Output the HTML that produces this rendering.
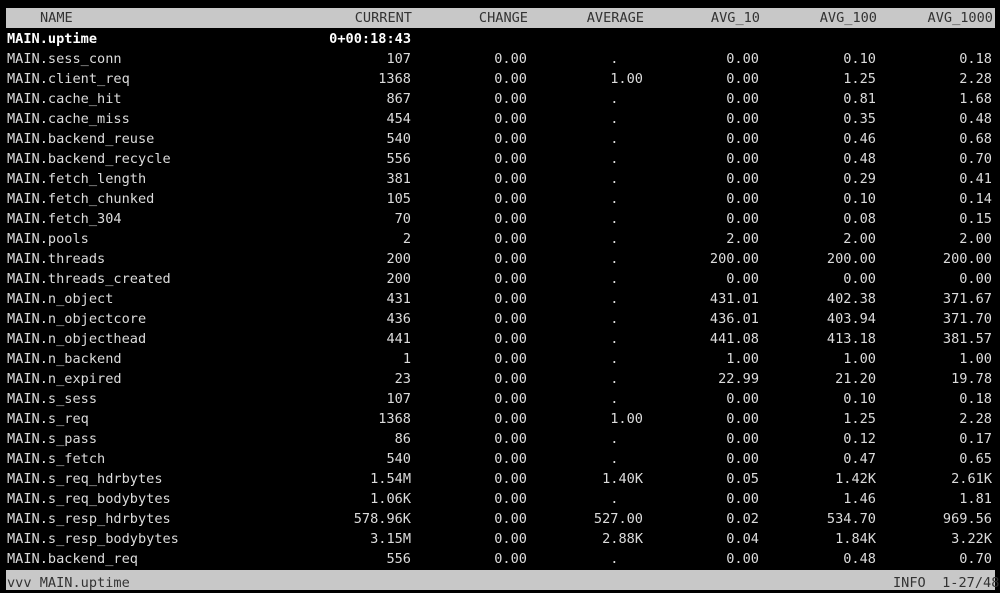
<!DOCTYPE html><html><head><meta charset="utf-8"><style>
body{margin:0;background:#000;width:1000px;height:585px;overflow:hidden;position:relative;font-family:"DejaVu Sans Mono","Liberation Mono",monospace;font-size:13.6px;color:#dcdcdc}
.r{position:absolute;left:0;width:1000px;height:20px;line-height:20px;white-space:pre}
.r span{position:absolute;top:0}
.r span:nth-child(1){left:7px}
.r span:nth-child(2){right:589px}
.r span:nth-child(3){right:473px}
.r span:nth-child(4){right:357px}
.r span:nth-child(5){right:241px}
.r span:nth-child(6){right:124px}
.r span:nth-child(7){right:8px}
.h{top:8px;left:6px;width:989px;background:#c8c8c8;color:#333}
.h span:nth-child(1){left:34px}
.h span:nth-child(2){right:583px}.h span:nth-child(3){right:467px}.h span:nth-child(4){right:351px}.h span:nth-child(5){right:235px}.h span:nth-child(6){right:118px}.h span:nth-child(7){right:2px}
.b{font-weight:bold;color:#fff}
.f{position:absolute;top:570px;left:6px;width:989px;height:20px;background:#c8c8c8;color:#333;line-height:20px;white-space:pre}
</style></head><body>
<div class="r h"><span>NAME</span><span>CURRENT</span><span>CHANGE</span><span>AVERAGE</span><span>AVG_10</span><span>AVG_100</span><span>AVG_1000</span></div>
<div class="r b" style="top:29px"><span>MAIN.uptime</span><span>0+00:18:43</span></div>
<div class="r" style="top:49px"><span>MAIN.sess_conn</span><span>107</span><span>0.00</span><span>.   </span><span>0.00</span><span>0.10</span><span>0.18</span></div>
<div class="r" style="top:69px"><span>MAIN.client_req</span><span>1368</span><span>0.00</span><span>1.00</span><span>0.00</span><span>1.25</span><span>2.28</span></div>
<div class="r" style="top:89px"><span>MAIN.cache_hit</span><span>867</span><span>0.00</span><span>.   </span><span>0.00</span><span>0.81</span><span>1.68</span></div>
<div class="r" style="top:109px"><span>MAIN.cache_miss</span><span>454</span><span>0.00</span><span>.   </span><span>0.00</span><span>0.35</span><span>0.48</span></div>
<div class="r" style="top:129px"><span>MAIN.backend_reuse</span><span>540</span><span>0.00</span><span>.   </span><span>0.00</span><span>0.46</span><span>0.68</span></div>
<div class="r" style="top:149px"><span>MAIN.backend_recycle</span><span>556</span><span>0.00</span><span>.   </span><span>0.00</span><span>0.48</span><span>0.70</span></div>
<div class="r" style="top:169px"><span>MAIN.fetch_length</span><span>381</span><span>0.00</span><span>.   </span><span>0.00</span><span>0.29</span><span>0.41</span></div>
<div class="r" style="top:189px"><span>MAIN.fetch_chunked</span><span>105</span><span>0.00</span><span>.   </span><span>0.00</span><span>0.10</span><span>0.14</span></div>
<div class="r" style="top:209px"><span>MAIN.fetch_304</span><span>70</span><span>0.00</span><span>.   </span><span>0.00</span><span>0.08</span><span>0.15</span></div>
<div class="r" style="top:229px"><span>MAIN.pools</span><span>2</span><span>0.00</span><span>.   </span><span>2.00</span><span>2.00</span><span>2.00</span></div>
<div class="r" style="top:249px"><span>MAIN.threads</span><span>200</span><span>0.00</span><span>.   </span><span>200.00</span><span>200.00</span><span>200.00</span></div>
<div class="r" style="top:269px"><span>MAIN.threads_created</span><span>200</span><span>0.00</span><span>.   </span><span>0.00</span><span>0.00</span><span>0.00</span></div>
<div class="r" style="top:289px"><span>MAIN.n_object</span><span>431</span><span>0.00</span><span>.   </span><span>431.01</span><span>402.38</span><span>371.67</span></div>
<div class="r" style="top:309px"><span>MAIN.n_objectcore</span><span>436</span><span>0.00</span><span>.   </span><span>436.01</span><span>403.94</span><span>371.70</span></div>
<div class="r" style="top:329px"><span>MAIN.n_objecthead</span><span>441</span><span>0.00</span><span>.   </span><span>441.08</span><span>413.18</span><span>381.57</span></div>
<div class="r" style="top:349px"><span>MAIN.n_backend</span><span>1</span><span>0.00</span><span>.   </span><span>1.00</span><span>1.00</span><span>1.00</span></div>
<div class="r" style="top:369px"><span>MAIN.n_expired</span><span>23</span><span>0.00</span><span>.   </span><span>22.99</span><span>21.20</span><span>19.78</span></div>
<div class="r" style="top:389px"><span>MAIN.s_sess</span><span>107</span><span>0.00</span><span>.   </span><span>0.00</span><span>0.10</span><span>0.18</span></div>
<div class="r" style="top:409px"><span>MAIN.s_req</span><span>1368</span><span>0.00</span><span>1.00</span><span>0.00</span><span>1.25</span><span>2.28</span></div>
<div class="r" style="top:429px"><span>MAIN.s_pass</span><span>86</span><span>0.00</span><span>.   </span><span>0.00</span><span>0.12</span><span>0.17</span></div>
<div class="r" style="top:449px"><span>MAIN.s_fetch</span><span>540</span><span>0.00</span><span>.   </span><span>0.00</span><span>0.47</span><span>0.65</span></div>
<div class="r" style="top:469px"><span>MAIN.s_req_hdrbytes</span><span>1.54M</span><span>0.00</span><span>1.40K</span><span>0.05</span><span>1.42K</span><span>2.61K</span></div>
<div class="r" style="top:489px"><span>MAIN.s_req_bodybytes</span><span>1.06K</span><span>0.00</span><span>.   </span><span>0.00</span><span>1.46</span><span>1.81</span></div>
<div class="r" style="top:509px"><span>MAIN.s_resp_hdrbytes</span><span>578.96K</span><span>0.00</span><span>527.00</span><span>0.02</span><span>534.70</span><span>969.56</span></div>
<div class="r" style="top:529px"><span>MAIN.s_resp_bodybytes</span><span>3.15M</span><span>0.00</span><span>2.88K</span><span>0.04</span><span>1.84K</span><span>3.22K</span></div>
<div class="r" style="top:549px"><span>MAIN.backend_req</span><span>556</span><span>0.00</span><span>.   </span><span>0.00</span><span>0.48</span><span>0.70</span></div>
<div class="f"><span style="position:absolute;left:1px;top:3px">vvv MAIN.uptime</span><span style="position:absolute;left:887px;top:3px">INFO  1-27/48</span></div>
</body></html>
